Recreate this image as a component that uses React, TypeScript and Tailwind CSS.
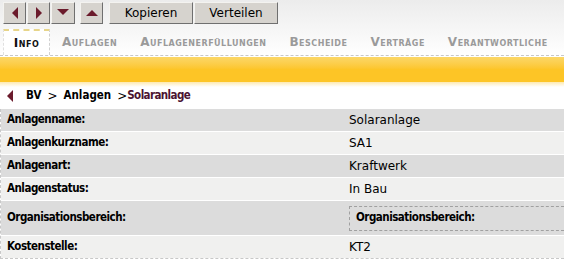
import React from "react"

// ─── CONSTANTS ────────────────────────────────────────────────────────────────

const FONT = "font-['DejaVu_Sans',Verdana,sans-serif]"
const BOLD = "font-['DejaVu_Sans_Condensed','DejaVu_Sans',Tahoma,sans-serif] font-bold"

const TABS = ["Info", "Auflagen", "Auflagenerfüllungen", "Bescheide", "Verträge", "Verantwortliche"]

const ROWS: { label: string; value: string; box?: boolean }[] = [
  { label: "Anlagenname:", value: "Solaranlage" },
  { label: "Anlagenkurzname:", value: "SA1" },
  { label: "Anlagenart:", value: "Kraftwerk" },
  { label: "Anlagenstatus:", value: "In Bau" },
  { label: "Organisationsbereich:", value: "Organisationsbereich:", box: true },
  { label: "Kostenstelle:", value: "KT2" },
]

const BTN =
  "flex h-[22px] shrink-0 items-center justify-center border border-t-[#f4f3f0] border-l-[#f4f3f0] border-r-[#6f6f6f] border-b-[#6f6f6f] bg-[#d6d3ce]"

// ─── ICONS ────────────────────────────────────────────────────────────────────

function Tri({ dir }: { dir: "l" | "r" | "d" | "u" }) {
  const pts = {
    l: "8,1 8,13 2,7",
    r: "2,1 2,13 8,7",
    d: "1,3 13,3 7,9",
    u: "1,10 13,10 7,4",
  }[dir]
  const w = dir === "l" || dir === "r" ? 10 : 14
  return (
    <svg width={w} height="14" viewBox={`0 0 ${w} 14`}>
      <polygon points={pts} fill="#6b1b2c" />
    </svg>
  )
}

// ─── COMPONENT ────────────────────────────────────────────────────────────────

export default function App() {
  return (
    <div className={`${FONT} h-[260px] w-[564px] overflow-hidden bg-white text-[12px] text-black`}>
      {/* ── TOOLBAR ─────────────────────────────────────────────── */}
      <div className="bg-gradient-to-b from-[#ececec] to-white pt-[2px]">
        <div className="flex items-center pl-[3px]">
          <div className={`${BTN} w-[23px]`}>
            <Tri dir="l" />
          </div>
          <div className={`${BTN} ml-[1px] w-[23px]`}>
            <Tri dir="r" />
          </div>
          <div className={`${BTN} ml-[1px] w-[24px]`}>
            <Tri dir="d" />
          </div>
          <div className={`${BTN} ml-[5px] w-[23px]`}>
            <Tri dir="u" />
          </div>
          <div className={`${BTN} ml-[6px] w-[84px]`}>Kopieren</div>
          <div className={`${BTN} ml-[1px] w-[84px]`}>Verteilen</div>
        </div>

        {/* ── TABS ──────────────────────────────────────────────── */}
        <div className="mt-[5px] flex h-[27px] items-stretch overflow-hidden border-b border-dashed border-[#c8c8c8] pl-[3px] text-[12px] font-bold tracking-[0.5px] [font-variant:small-caps]">
          {TABS.map((t, i) =>
            i === 0 ? (
              <div
                key={t}
                className="flex w-[47px] shrink-0 items-center justify-center border-t-2 border-r border-l border-dashed border-t-[#e7d58a] border-r-[#d0d0d0] border-l-[#e0e0e0] bg-white text-[#111]"
              >
                {t}
              </div>
            ) : (
              <div key={t} className="flex shrink-0 items-center pl-[12px] pr-[11px] text-[#9a9a9a]">
                {t}
              </div>
            )
          )}
        </div>
      </div>

      {/* ── YELLOW BAR ───────────────────────────────────────────── */}
      <div className="mt-[1px] h-[25px] bg-gradient-to-b from-[#fbd766] via-[#fdc526] to-[#fdc526]" />
      <div className="h-[5px] bg-gradient-to-b from-[#fde9b0] to-white" />

      {/* ── BREADCRUMB ───────────────────────────────────────────── */}
      <div className="flex h-[18px] items-center pl-[5px] text-[12px]">
        <Tri dir="l" />
        <span className={`${BOLD} ml-[11px] text-[11.5px]`}>BV</span>
        <span className="ml-[6px]">&gt;</span>
        <span className={`${BOLD} ml-[6px] text-[11.5px]`}>Anlagen</span>
        <span className="ml-[6px]">&gt;</span>
        <span className={`${BOLD} text-[11.5px] tracking-[-0.6px] text-[#4b1431]`}>Solaranlage</span>
      </div>

      {/* ── DETAIL ROWS ──────────────────────────────────────────── */}
      <div className="mt-[4px] flex flex-col gap-[1px] border-b border-l border-dashed border-[#c8c8c8]">
        {ROWS.map((r, i) => (
          <div
            key={r.label}
            className={`grid grid-cols-[348px_1fr] items-center ${
              i % 2 === 0 ? "bg-[#dcdcdc]" : "bg-[#f0f0ef]"
            } ${r.box ? "h-[34px]" : "h-[22px]"}`}
          >
            <div className={`${BOLD} pl-[6px] text-[11.5px] tracking-[-0.5px]`}>{r.label}</div>
            {r.box ? (
              <div
                className={`${BOLD} flex h-[25px] items-center border border-r-0 border-dashed border-[#a0a0a0] pl-[6px] text-[11.5px] tracking-[-0.5px]`}
              >
                {r.value}
              </div>
            ) : (
              <div>{r.value}</div>
            )}
          </div>
        ))}
      </div>
    </div>
  )
}
